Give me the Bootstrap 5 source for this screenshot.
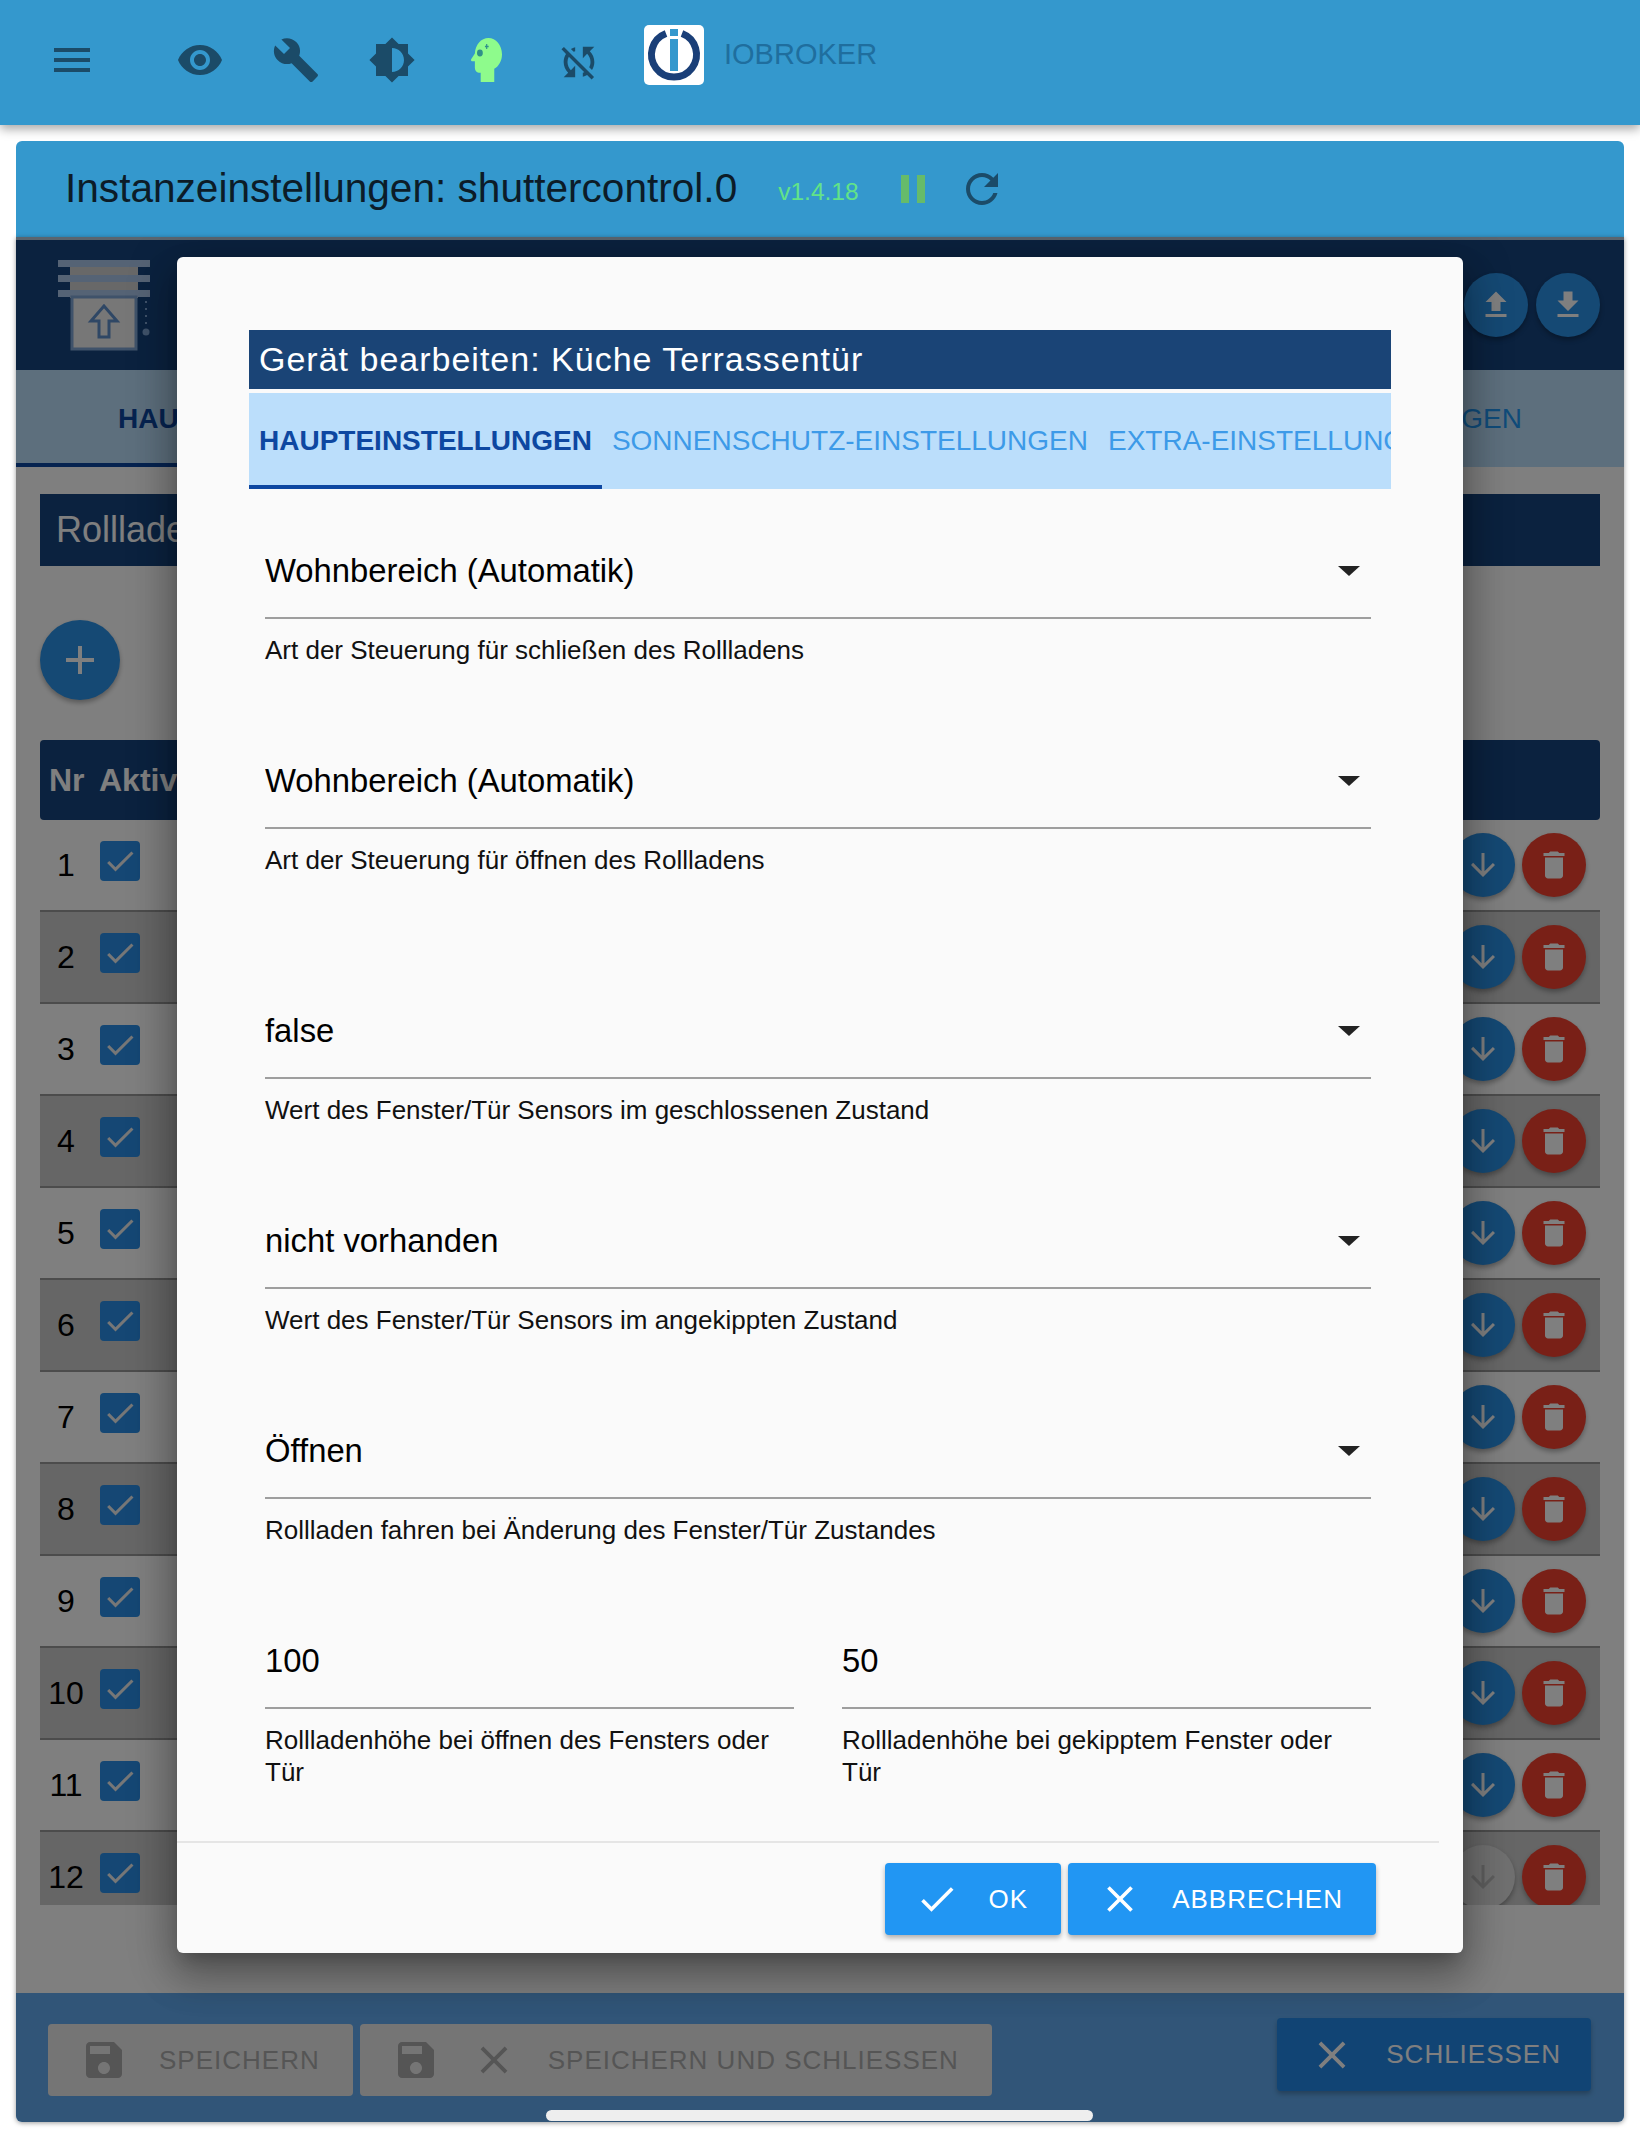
<!DOCTYPE html>
<html lang="de">
<head>
    <meta charset="UTF-8">
    <meta name="viewport" content="width=device-width, initial-scale=1.0">
    <title>Instanzeinstellungen: shuttercontrol.0</title>
    <link href="https://cdn.jsdelivr.net/npm/bootstrap@5.3.3/dist/css/bootstrap.min.css" rel="stylesheet">
    <style>
        html, body { height: 100%; }
        body {
            font-family: "Liberation Sans", Arial, sans-serif;
            background-color: #fff;
            color: #000;
            overflow: hidden;
        }
        svg { fill: currentColor; flex-shrink: 0; display: block; }

        /* app bar */
        .app-bar {
            height: 125px;
            padding: 0 0 5px 48px;
            background-color: #3498cd;
            color: #1b4b68;
            box-shadow: 0 4px 10px rgba(0,0,0,.35);
            position: relative;
        }
        .app-bar .ic { width: 48px; height: 48px; margin-right: 48px; }
        .app-bar .ic-menu { margin-right: 80px; }
        .app-bar .ic-head { width: 31px; height: 44px; margin: 0 54px 0 7px; }
        .app-bar .ic-sync { width: 46px; height: 46px; margin: 4px 42px 0 0; }
        .app-logo { width: 60px; height: 60px; margin-top: -10px; }
        .app-name { font-size: 29px; margin: -10px 0 0 20px; color: #1f6e9e; }

        /* page */
        .page-wrap { margin: 16px 16px 0; height: 1981px; }
        .inst-head {
            height: 96px;
            padding-left: 49px;
            background-color: #3498cd;
            border-radius: 6px 6px 0 0;
        }
        .inst-title { font-size: 40.6px; color: #0c1c28; margin: 0; padding-bottom: 2px; font-weight: 400; }
        .inst-version { font-size: 24.5px; color: #62e388; margin: 6px 0 0 41px; }
        .inst-pause { width: 48px; height: 48px; color: #66bb6a; margin: 0 0 0 30px; }
        .inst-reload { width: 48px; height: 48px; color: #1b4b68; margin-left: 21px; }

        .dim-zone {
            height: 1885px;
            background-color: #fff;
            border-radius: 0 0 6px 6px;
            overflow: hidden;
            box-shadow: 0 1px 5px rgba(0,0,0,.4);
        }
        .dim-layer { position: absolute; inset: 0; background-color: rgba(0,0,0,.5); }
        .cfg-head {
            height: 133px;
            padding: 0 24px 0 42px;
            background-color: #16447e;
            border-top: 3px solid #b4cade;
        }
        .round-btn {
            width: 64px;
            height: 64px;
            padding: 0;
            border: 0;
            border-radius: 50%;
            color: #fff;
            background-color: #2a92e8;
            box-shadow: 0 3px 5px rgba(0,0,0,.3);
        }
        .round-btn:hover { color: #fff; background-color: #2a92e8; }
        .round-btn svg { width: 36px; height: 36px; }
        .round-del, .round-del:hover { background-color: #f2402f; }
        .round-off, .round-off:hover { background-color: #e0e0e0; color: #bdbdbd; }
        .cfg-tabs {
            height: 97px;
            padding: 0 102px;
            background-color: #bbdefb;
            font-size: 28px;
            color: #2196f3;
        }
        .cfg-tabs b { color: #0d47a1; }
        .cfg-tab-line { height: 4px; width: 330px; background-color: #0d47a1; position: absolute; left: 0; top: 226px; }
        .cfg-body { padding: 27px 24px 0; }
        .sect-bar {
            height: 72px;
            padding-left: 16px;
            background-color: #16447e;
            color: #fff;
            font-size: 36px;
        }
        .fab-add { width: 80px; height: 80px; margin: 54px 0 40px; }
        .fab-add svg { width: 48px; height: 48px; }
        .tbl-clip { height: 1165px; overflow: hidden; }
        .tbl-head {
            height: 80px;
            padding-left: 9px;
            background-color: #16447e;
            color: #fff;
            font-size: 32px;
            font-weight: 700;
            border-radius: 4px;
        }
        .tbl-head span:first-child { width: 50px; }
        .tbl-row { height: 92px; padding-right: 14px; border-bottom: 2px solid #999; }
        .tbl-row:nth-child(even) { background-color: #ccc; }
        .tbl-num { width: 60px; text-align: center; font-size: 32px; padding-right: 8px; }
        .tbl-chk {
            width: 40px;
            height: 40px;
            border-radius: 4px;
            background-color: #2a8fe8;
            color: #eee;
            margin-bottom: 8px;
        }
        .tbl-chk svg { width: 36px; height: 36px; margin: 2px; }
        .tbl-row .round-btn { margin-left: 7px; }

        .foot-bar {
            position: absolute;
            left: 0;
            right: 0;
            bottom: 0;
            height: 129px;
            padding: 25px 33px 0 32px;
            background-color: #62abf0;
        }
        .foot-btn {
            height: 72px;
            padding: 0 33px 0 32px;
            border: 0;
            gap: 31px;
            font-size: 26px;
            letter-spacing: 1px;
            text-transform: uppercase;
            border-radius: 4px;
            box-shadow: 0 3px 5px rgba(0,0,0,.25);
            white-space: nowrap;
        }
        .foot-btn svg { width: 46px; height: 46px; }
        .foot-btn svg.ic-disk { width: 48px; height: 48px; }
        .foot-off { background-color: #ebebeb; color: #aaa; box-shadow: none; margin: 6px 7px 0 0; }
        .foot-off:hover { background-color: #ebebeb; color: #aaa; }
        .foot-on { background-color: #2288e8; color: #fff; margin-left: auto; height: 73px; padding-right: 30px; }
        .foot-on:hover { background-color: #2288e8; color: #fff; }

        /* dialog */
        .dlg-box {
            position: absolute;
            left: 161px;
            top: 20px;
            width: 1286px;
            height: 1696px;
            padding-top: 73px;
            background-color: #fafafa;
            border-radius: 6px;
            box-shadow: 0 11px 15px -7px rgba(0,0,0,.2), 0 24px 38px 3px rgba(0,0,0,.2), 0 9px 46px 8px rgba(0,0,0,.2);
        }
        .dlg-title {
            height: 59px;
            margin: 0 72px 4px;
            padding-left: 10px;
            background-color: #1a4476;
            color: #fff;
            font-size: 34px;
            font-weight: 400;
            letter-spacing: 1px;
        }
        .dlg-tabs {
            height: 96px;
            margin: 0 72px 50px;
            background-color: #bbdefb;
            overflow: hidden;
            flex-wrap: nowrap;
        }
        .dlg-tabs .nav-link {
            display: flex;
            align-items: center;
            flex-shrink: 0;
            padding: 0 10px;
            font-size: 28px;
            color: #3d9ae8;
            text-transform: uppercase;
            white-space: nowrap;
        }
        .dlg-tabs .nav-link.active {
            color: #0d47a1;
            font-weight: 700;
            box-shadow: inset 0 -4px 0 #0d47a1;
        }
        .dlg-form { padding: 0 20px 0 16px; margin: 0 72px; flex-grow: 1; }
        .fld { margin-bottom: 83px; }
        .fld-gap { margin-top: 123px; }
        .fld-sel, .fld-inp {
            height: 80px;
            padding: 0 0 15px;
            border: 0;
            border-bottom: 2px solid #9e9e9e;
            border-radius: 0;
            background-color: transparent;
            font-size: 32.8px;
            color: #000;
        }
        .fld-sel {
            background-image: url("data:image/svg+xml,%3Csvg xmlns='http://www.w3.org/2000/svg' viewBox='0 0 22 10'%3E%3Cpath fill='%23222' d='M0 0h22L11 10z'/%3E%3C/svg%3E");
            background-repeat: no-repeat;
            background-size: 22px 10px;
            background-position: right 11px top 27px;
        }
        .fld-help { margin-top: 15px; font-size: 26px; line-height: 32px; color: #111; }
        .dlg-foot {
            height: 112px;
            margin-right: 24px;
            padding: 20px 63px 0 0;
            border-top: 2px solid #e5e5e5;
            gap: 7px;
        }
        .dlg-btn {
            height: 72px;
            padding: 0 33px 0 30px;
            border: 0;
            border-radius: 4px;
            background-color: #2196f3;
            color: #fff;
            font-size: 26px;
            letter-spacing: 1px;
            gap: 30px;
            box-shadow: 0 3px 5px rgba(0,0,0,.3);
        }
        .dlg-btn:hover { background-color: #2196f3; color: #fff; }
        .dlg-btn svg { width: 44px; height: 44px; }
        .home-bar {
            position: absolute;
            left: 546px;
            top: 2110px;
            width: 547px;
            height: 11px;
            border-radius: 6px;
            background-color: #eee;
        }
    </style>
</head>
<body>
    <!-- icon sprite -->
    <svg width="0" height="0" class="position-absolute">
        <symbol id="i-menu" viewBox="0 0 24 24"><path d="M3 18h18v-2H3v2zm0-5h18v-2H3v2zm0-7v2h18V6H3z"/></symbol>
        <symbol id="i-eye" viewBox="0 0 24 24"><path d="M12 4.5C7 4.5 2.73 7.61 1 12c1.73 4.39 6 7.5 11 7.5s9.27-3.11 11-7.5c-1.73-4.39-6-7.5-11-7.5zM12 17c-2.76 0-5-2.24-5-5s2.24-5 5-5 5 2.24 5 5-2.24 5-5 5zm0-8c-1.66 0-3 1.34-3 3s1.34 3 3 3 3-1.34 3-3-1.34-3-3-3z"/></symbol>
        <symbol id="i-build" viewBox="0 0 24 24"><path d="M22.7 19l-9.1-9.1c.9-2.3.4-5-1.5-6.9-2-2-5-2.4-7.4-1.3L9 6 6 9 1.6 4.7C.4 7.1.9 10.1 2.9 12.1c1.9 1.9 4.6 2.4 6.9 1.5l9.1 9.1c.4.4 1 .4 1.4 0l2.3-2.3c.5-.4.5-1.1.1-1.4z"/></symbol>
        <symbol id="i-bright" viewBox="0 0 24 24"><path d="M20 15.31L23.31 12 20 8.69V4h-4.69L12 .69 8.69 4H4v4.69L.69 12 4 15.31V20h4.69L12 23.31 15.31 20H20v-4.69zM12 18V6c3.31 0 6 2.69 6 6s-2.69 6-6 6z"/></symbol>
        <symbol id="i-syncoff" viewBox="0 0 24 24"><path d="M10 6.35V4.26c-.8.21-1.55.54-2.23.96l1.46 1.46c.25-.12.5-.24.77-.33zm-7.14-.94l2.36 2.36C4.45 8.99 4 10.44 4 12c0 2.21.91 4.2 2.36 5.64L4 20h6v-6l-2.24 2.24C6.68 15.15 6 13.66 6 12c0-1 .25-1.94.68-2.77l8.08 8.08c-.25.13-.5.25-.77.34v2.09c.8-.21 1.55-.54 2.23-.96l2.36 2.36 1.27-1.27L4.14 4.14 2.86 5.41zM20 4h-6v6l2.24-2.24C17.32 8.85 18 10.34 18 12c0 1-.25 1.94-.68 2.77l1.46 1.46C19.55 15.01 20 13.56 20 12c0-2.21-.91-4.2-2.36-5.64L20 4z"/></symbol>
        <symbol id="i-save" viewBox="0 0 24 24"><path d="M17 3H5c-1.11 0-2 .9-2 2v14c0 1.1.89 2 2 2h14c1.1 0 2-.9 2-2V7l-4-4zm-5 16c-1.66 0-3-1.34-3-3s1.34-3 3-3 3 1.34 3 3-1.34 3-3 3zm3-10H5V5h10v4z"/></symbol>
        <symbol id="i-close" viewBox="0 0 24 24"><path d="M19 6.41L17.59 5 12 10.59 6.41 5 5 6.41 10.59 12 5 17.59 6.41 19 12 13.41 17.59 19 19 17.59 13.41 12z"/></symbol>
        <symbol id="i-check" viewBox="0 0 24 24"><path d="M9 16.17L4.83 12l-1.42 1.41L9 19 21 7l-1.41-1.41z"/></symbol>
        <symbol id="i-add" viewBox="0 0 24 24"><path d="M19 13h-6v6h-2v-6H5v-2h6V5h2v6h6v2z"/></symbol>
        <symbol id="i-down" viewBox="0 0 24 24"><path d="M20 12l-1.41-1.41L13 16.17V4h-2v12.17l-5.58-5.59L4 12l8 8 8-8z"/></symbol>
        <symbol id="i-del" viewBox="0 0 24 24"><path d="M6 19c0 1.1.9 2 2 2h8c1.1 0 2-.9 2-2V7H6v12zM19 4h-3.5l-1-1h-5l-1 1H5v2h14V4z"/></symbol>
        <symbol id="i-upload" viewBox="0 0 24 24"><path d="M9 16h6v-6h4l-7-7-7 7h4zm-4 2h14v2H5z"/></symbol>
        <symbol id="i-download" viewBox="0 0 24 24"><path d="M19 9h-4V3H9v6H5l7 7 7-7zM5 18v2h14v-2H5z"/></symbol>
        <symbol id="i-pause" viewBox="0 0 24 24"><path d="M6 19h4V5H6v14zm8-14v14h4V5h-4z"/></symbol>
        <symbol id="i-reload" viewBox="0 0 24 24"><path d="M17.65 6.35C16.2 4.9 14.21 4 12 4c-4.42 0-7.99 3.58-7.99 8s3.57 8 7.99 8c3.73 0 6.84-2.55 7.73-6h-2.08c-.82 2.33-3.04 4-5.65 4-3.31 0-6-2.69-6-6s2.69-6 6-6c1.66 0 3.14.69 4.22 1.78L13 11h7V4l-2.35 2.35z"/></symbol>
    </svg>

    <!-- App bar -->
    <header class="app-bar d-flex align-items-center">
        <svg class="ic ic-menu"><use href="#i-menu"/></svg>
        <svg class="ic"><use href="#i-eye"/></svg>
        <svg class="ic"><use href="#i-build"/></svg>
        <svg class="ic"><use href="#i-bright"/></svg>
        <svg class="ic-head" viewBox="4 3 16 19" preserveAspectRatio="none">
            <path fill="#8efb8c" d="M13 3C9.23 3 6.19 5.95 6 9.66l-1.92 2.53c-.24.31 0 .81.42.81H6v3c0 1.11.89 2 2 2h1v4h7v-5.69c2.37-1.12 4-3.51 4-6.31 0-3.86-3.12-7-7-7z"/>
            <circle cx="8.6" cy="9.5" r="1.5" fill="#2f8f8a"/>
            <path d="M11.2 6.4h.6v-.8h.6v.8h.7v.6h-.7v.8h-.6V7h-.6z" fill="#2f8f8a"/>
        </svg>
        <svg class="ic-sync"><use href="#i-syncoff"/></svg>
        <svg class="app-logo" viewBox="0 0 60 60">
            <rect width="60" height="60" rx="5" fill="#fff"/>
            <path d="M22 8.5A22.5 22.5 0 1 0 38 8.5" fill="none" stroke="#1a3f78" stroke-width="7"/>
            <rect x="26" y="4" width="8" height="7" fill="#3498cd"/>
            <rect x="26" y="14" width="8" height="32" fill="#3498cd"/>
        </svg>
        <span class="app-name">IOBROKER</span>
    </header>

    <main class="page-wrap">
        <div class="inst-head d-flex align-items-center">
            <h1 class="inst-title">Instanzeinstellungen: shuttercontrol.0</h1>
            <span class="inst-version">v1.4.18</span>
            <svg class="inst-pause"><use href="#i-pause"/></svg>
            <svg class="inst-reload"><use href="#i-reload"/></svg>
        </div>

        <div class="dim-zone position-relative">
            <div class="cfg-head d-flex align-items-center">
                <svg width="92" height="92" viewBox="0 0 92 92" class="me-auto">
                    <rect x="12" y="1" width="68" height="38" fill="#d0d0d0"/>
                    <rect y="1" width="92" height="7" fill="#aac6ea"/>
                    <rect y="16" width="92" height="7" fill="#aac6ea"/>
                    <rect y="31" width="92" height="7" fill="#aac6ea"/>
                    <rect x="14" y="38" width="64" height="52" fill="#eee" stroke="#7fa4d4" stroke-width="3"/>
                    <path d="M46 47L33 62h8v16h10V62h8z" fill="none" stroke="#5f8fca" stroke-width="3"/>
                    <path d="M88 42v28" fill="none" stroke="#7fa4d4" stroke-width="2" stroke-dasharray="2 5"/>
                    <circle cx="88" cy="73" r="3.5" fill="#7fa4d4"/>
                </svg>
                <button class="btn round-btn d-flex align-items-center justify-content-center me-2"><svg><use href="#i-upload"/></svg></button>
                <button class="btn round-btn d-flex align-items-center justify-content-center"><svg><use href="#i-download"/></svg></button>
            </div>
            <div class="cfg-tabs d-flex align-items-center justify-content-between position-relative">
                <b>HAUPTEINSTELLUNGEN</b>
                <span>EXTRA-EINSTELLUNGEN</span>
            </div>
            <div class="cfg-tab-line"></div>
            <div class="cfg-body">
                <div class="sect-bar d-flex align-items-center">Rollladen</div>
                <button class="btn round-btn fab-add d-flex align-items-center justify-content-center"><svg><use href="#i-add"/></svg></button>
                <div class="tbl-clip">
                    <div class="tbl-head d-flex align-items-center"><span>Nr</span><span>Aktiv</span></div>
                    <div id="rows"></div>
                </div>
            </div>
            <div class="foot-bar d-flex align-items-start">
                <button class="btn foot-btn foot-off d-flex align-items-center"><svg class="ic-disk"><use href="#i-save"/></svg>Speichern</button>
                <button class="btn foot-btn foot-off d-flex align-items-center"><svg class="ic-disk"><use href="#i-save"/></svg><svg><use href="#i-close"/></svg>Speichern und schließen</button>
                <button class="btn foot-btn foot-on d-flex align-items-center"><svg><use href="#i-close"/></svg>Schließen</button>
            </div>
            <div class="dim-layer"></div>

            <!-- Edit dialog -->
            <div class="dlg-box d-flex flex-column">
                <h2 class="dlg-title d-flex align-items-center">Gerät bearbeiten: Küche Terrassentür</h2>
                <nav class="nav dlg-tabs">
                    <a class="nav-link active" href="#">Haupteinstellungen</a>
                    <a class="nav-link" href="#">Sonnenschutz-Einstellungen</a>
                    <a class="nav-link" href="#">Extra-Einstellungen</a>
                </nav>
                <form class="dlg-form">
                    <div class="fld">
                        <select class="form-select fld-sel"><option>Wohnbereich (Automatik)</option></select>
                        <div class="form-text fld-help">Art der Steuerung für schließen des Rollladens</div>
                    </div>
                    <div class="fld">
                        <select class="form-select fld-sel"><option>Wohnbereich (Automatik)</option></select>
                        <div class="form-text fld-help">Art der Steuerung für öffnen des Rollladens</div>
                    </div>
                    <div class="fld fld-gap">
                        <select class="form-select fld-sel"><option>false</option></select>
                        <div class="form-text fld-help">Wert des Fenster/Tür Sensors im geschlossenen Zustand</div>
                    </div>
                    <div class="fld">
                        <select class="form-select fld-sel"><option>nicht vorhanden</option></select>
                        <div class="form-text fld-help">Wert des Fenster/Tür Sensors im angekippten Zustand</div>
                    </div>
                    <div class="fld">
                        <select class="form-select fld-sel"><option>Öffnen</option></select>
                        <div class="form-text fld-help">Rollladen fahren bei Änderung des Fenster/Tür Zustandes</div>
                    </div>
                    <div class="d-flex gap-5">
                        <div class="flex-fill w-50">
                            <input class="form-control fld-inp" value="100">
                            <div class="form-text fld-help">Rollladenhöhe bei öffnen des Fensters oder Tür</div>
                        </div>
                        <div class="flex-fill w-50">
                            <input class="form-control fld-inp" value="50">
                            <div class="form-text fld-help">Rollladenhöhe bei gekipptem Fenster oder Tür</div>
                        </div>
                    </div>
                </form>
                <div class="dlg-foot d-flex justify-content-end align-items-start">
                    <button class="btn dlg-btn d-flex align-items-center"><svg><use href="#i-check"/></svg>OK</button>
                    <button class="btn dlg-btn d-flex align-items-center"><svg><use href="#i-close"/></svg>ABBRECHEN</button>
                </div>
            </div>
        </div>
    </main>
    <div class="home-bar"></div>

    <script src="https://cdn.jsdelivr.net/npm/bootstrap@5.3.3/dist/js/bootstrap.bundle.min.js"></script>
    <script>
        // table rows behind the dialog
        const rowsEl = document.getElementById('rows');
        let html = '';
        for (let n = 1; n <= 12; n++) {
            const downClass = n === 12 ? 'round-off' : '';
            html += `<div class="tbl-row d-flex align-items-center">
                <span class="tbl-num">${n}</span>
                <span class="tbl-chk me-auto"><svg><use href="#i-check"/></svg></span>
                <button class="btn round-btn ${downClass} d-flex align-items-center justify-content-center"><svg><use href="#i-down"/></svg></button>
                <button class="btn round-btn round-del d-flex align-items-center justify-content-center"><svg><use href="#i-del"/></svg></button>
            </div>`;
        }
        rowsEl.innerHTML = html;
    </script>
</body>
</html>
